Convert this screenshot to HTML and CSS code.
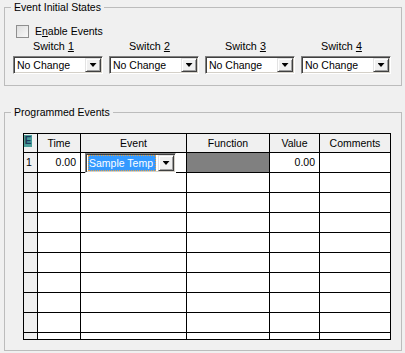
FILE: index.html
```html
<!DOCTYPE html>
<html>
<head>
	<title>Program Events</title>
	<link rel="stylesheet" href="styles.css">
</head>
<body>
	<fieldset class="group states">
		<legend>Event Initial States</legend>
		<div class="check"><span class="check-box"></span><span>E<u>n</u>able Events</span></div>
		<div class="switches">
			<div class="switch">
				<div class="switch-label">Switch <u>1</u></div>
				<div class="combo"><span class="combo-text">No Change</span><span class="combo-btn"></span></div>
			</div>
			<div class="switch">
				<div class="switch-label">Switch <u>2</u></div>
				<div class="combo"><span class="combo-text">No Change</span><span class="combo-btn"></span></div>
			</div>
			<div class="switch">
				<div class="switch-label">Switch <u>3</u></div>
				<div class="combo"><span class="combo-text">No Change</span><span class="combo-btn"></span></div>
			</div>
			<div class="switch">
				<div class="switch-label">Switch <u>4</u></div>
				<div class="combo"><span class="combo-text">No Change</span><span class="combo-btn"></span></div>
			</div>
		</div>
	</fieldset>

	<fieldset class="group programmed">
		<legend>Programmed Events</legend>
		<div class="grid">
			<div class="corner"><span class="corner-icon">E</span></div>
			<div class="head">Time</div>
			<div class="head">Event</div>
			<div class="head">Function</div>
			<div class="head">Value</div>
			<div class="head">Comments</div>

			<div class="rowhead">1</div>
			<div class="cell num">0.00</div>
			<div class="cell"><div class="combo combo-cell"><span class="combo-text selected">Sample Temp</span><span class="combo-btn"></span></div></div>
			<div class="cell function"></div>
			<div class="cell num">0.00</div>
			<div class="cell"></div>

			<div class="rowhead"></div><div class="cell"></div><div class="cell"></div><div class="cell"></div><div class="cell"></div><div class="cell"></div>
			<div class="rowhead"></div><div class="cell"></div><div class="cell"></div><div class="cell"></div><div class="cell"></div><div class="cell"></div>
			<div class="rowhead"></div><div class="cell"></div><div class="cell"></div><div class="cell"></div><div class="cell"></div><div class="cell"></div>
			<div class="rowhead"></div><div class="cell"></div><div class="cell"></div><div class="cell"></div><div class="cell"></div><div class="cell"></div>
			<div class="rowhead"></div><div class="cell"></div><div class="cell"></div><div class="cell"></div><div class="cell"></div><div class="cell"></div>
			<div class="rowhead"></div><div class="cell"></div><div class="cell"></div><div class="cell"></div><div class="cell"></div><div class="cell"></div>
			<div class="rowhead"></div><div class="cell"></div><div class="cell"></div><div class="cell"></div><div class="cell"></div><div class="cell"></div>
			<div class="rowhead"></div><div class="cell"></div><div class="cell"></div><div class="cell"></div><div class="cell"></div><div class="cell"></div>
			<div class="rowhead"></div><div class="cell"></div><div class="cell"></div><div class="cell"></div><div class="cell"></div><div class="cell"></div>
		</div>
	</fieldset>
</body>
</html>
```

FILE: styles.css
```css
html {
	background: #f0f0f0;
}
body {
	margin: 0;
	font-family: "Liberation Sans", Arial, sans-serif;
	font-size: 10.5px;
	color: #000;
}
.group {
	margin: 1px 3px 0 4px;
	padding: 0 6px 10px;
	border: 1px solid #bcbcbc;
	min-width: 0;
}
.group legend {
	padding: 0 3px;
	line-height: 13px;
}
.states {
	padding-bottom: 11px;
}
.programmed {
	margin-top: 20px;
}

/* checkbox row */
.check {
	display: flex;
	align-items: center;
	gap: 6px;
	height: 13px;
	margin: 11px 0 0 5px;
	line-height: 13px;
}
.check-box {
	width: 13px;
	height: 13px;
	box-sizing: border-box;
	border: 1px solid #8f8f8f;
	background: linear-gradient(135deg, #dedede, #f8f8f8);
}

/* switches */
.switches {
	display: grid;
	grid-template-columns: repeat(4, 90px);
	gap: 6px;
	margin: 2px 0 0 2px;
}
.switch-label {
	text-align: center;
	padding-right: 9px;
	line-height: 13px;
	margin-bottom: 3px;
	font-size: 10.8px;
}

/* combo boxes */
.combo {
	display: flex;
	height: 18px;
	box-sizing: border-box;
	padding: 1px;
	border: 1px solid;
	border-color: #808080 #fff #fff #808080;
	box-shadow: inset 1px 1px #404040, inset -1px -1px #d4d0c8;
	background: #fff;
}
.combo-text {
	flex: 1;
	padding-left: 2px;
	line-height: 14px;
	white-space: nowrap;
	overflow: hidden;
}
.combo-btn {
	display: flex;
	align-items: center;
	justify-content: center;
	width: 16px;
	box-sizing: border-box;
	border: 1px solid;
	border-color: #e3e3e3 #404040 #404040 #e3e3e3;
	box-shadow: inset 1px 1px #fff, inset -1px -1px #a0a0a0;
	background: #f0f0f0;
}
.combo-btn::after {
	content: "";
	width: 7px;
	height: 4px;
	background: #000;
	clip-path: polygon(0 0, 100% 0, 50% 100%);
}
.combo-cell {
	width: 91px;
	height: 20px;
	margin-left: 4px;
}
.combo-text.selected {
	margin: 0 2px 0 1px;
	padding-left: 0;
	overflow: visible;
	background: #3399ff;
	color: #fff;
	border: 1px dotted #e8a040;
}

/* grid */
.grid {
	display: grid;
	grid-template-columns: 13px 42px 105px 82px 49px 70px;
	grid-template-rows: 18px repeat(9, 19px) 6px;
	gap: 1px;
	padding: 1px;
	width: max-content;
	margin: 14px 0 0 12px;
	background: #000;
}
.grid div.cell {
	background: #fff;
	line-height: 19px;
}
.head,
.rowhead,
.corner {
	background: #f0f0f0;
}
.head {
	text-align: center;
	line-height: 18px;
}
.rowhead {
	padding-left: 2px;
	line-height: 19px;
}
.corner-icon {
	display: block;
	width: 8px;
	height: 12px;
	margin: 1px 0 0 0;
	background: #4a9e98;
	color: #1c3a5c;
	font-size: 10px;
	font-weight: bold;
	line-height: 12px;
	text-align: center;
}
.grid div.num {
	text-align: right;
	padding-right: 4px;
}
.grid div.function {
	background: #808080;
}
```
